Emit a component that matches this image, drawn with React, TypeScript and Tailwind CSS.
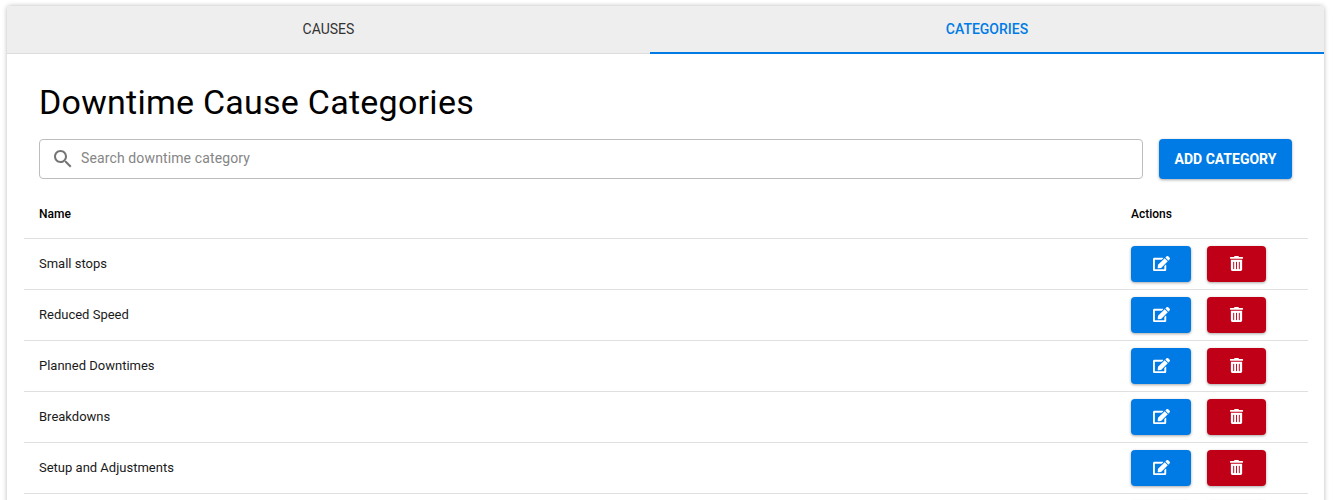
import { FaEdit, FaTrashAlt } from "react-icons/fa";

const rows = ["Small stops", "Reduced Speed", "Planned Downtimes", "Breakdowns", "Setup and Adjustments", ""];
const shadow = "shadow-[0_1px_3px_rgba(0,0,0,0.35)]";

export default function App() {
  return (
    <div className="h-[500px] overflow-hidden bg-white pt-[6px] pl-[7px] pr-[10px] font-['Roboto',sans-serif]">
      <div className="rounded-[4px] bg-white shadow-[0_0_5px_rgba(0,0,0,0.28)] h-[600px]">
        <div className="flex h-[48px] rounded-t-[4px] bg-[#eeeeee] text-[14px]">
          <div className="flex w-[643px] items-center justify-center border-b border-[#dcdcdc] text-[#333333]">CAUSES</div>
          <div className="flex flex-1 items-center justify-center border-b-2 border-[#007be5] font-medium text-[#007be5]">CATEGORIES</div>
        </div>
        <div className="pl-[17px] pr-[16px]">
          <h1 className="pl-[15px] pt-[26px] text-[34px] leading-[44px] font-normal tracking-[0.25px] text-black">Downtime Cause Categories</h1>
          <div className="mt-[15px] flex gap-[16px] pl-[15px] pr-[16px]">
            <div className="flex h-[40px] flex-1 items-center rounded-[4px] border border-[#bdbdbd] pl-[11px]">
              <svg viewBox="0 0 24 24" className="h-[24px] w-[24px] fill-[#757575]">
                <path d="M15.5 14h-.79l-.28-.27C15.41 12.59 16 11.11 16 9.5 16 5.91 13.09 3 9.5 3S3 5.91 3 9.5 5.91 16 9.5 16c1.61 0 3.09-.59 4.23-1.57l.27.28v.79l5 4.99L20.49 19l-4.99-5zm-6 0C7.01 14 5 11.99 5 9.5S7.01 5 9.5 5 14 7.01 14 9.5 11.99 14 9.5 14z" />
              </svg>
              <span className="ml-[6px] pb-[2px] text-[14px] tracking-[0.125px] text-[#858585]">Search downtime category</span>
            </div>
            <button className={`h-[40px] w-[133px] rounded-[4px] bg-[#007be5] text-[14px] font-bold text-white ${shadow}`}>ADD CATEGORY</button>
          </div>
          <div className="mt-[10px] flex h-[50px] items-center border-b border-[#e0e0e0] pl-[15px] text-[12px] font-medium text-black">
            <div className="flex-1">Name</div>
            <div className="w-[177px]">Actions</div>
          </div>
          {rows.map((r, i) => (
            <div key={i} className="flex h-[51px] items-center border-b border-[#e0e0e0] pl-[15px] text-[13px] text-[#1a1a1a]">
              <div className="flex-1">{r}</div>
              <div className="flex w-[177px] gap-[16px]">
                <button className={`flex h-[36px] w-[60px] items-center justify-center rounded-[4px] bg-[#007be5] pb-[2px] text-white ${shadow}`}>
                  <FaEdit className="h-[17px] w-[17px]" />
                </button>
                <button className={`flex h-[36px] w-[59px] items-center justify-center rounded-[4px] bg-[#c00017] pb-[2px] text-white ${shadow}`}>
                  <FaTrashAlt className="h-[15px] w-[15px]" />
                </button>
              </div>
            </div>
          ))}
        </div>
      </div>
    </div>
  );
}
